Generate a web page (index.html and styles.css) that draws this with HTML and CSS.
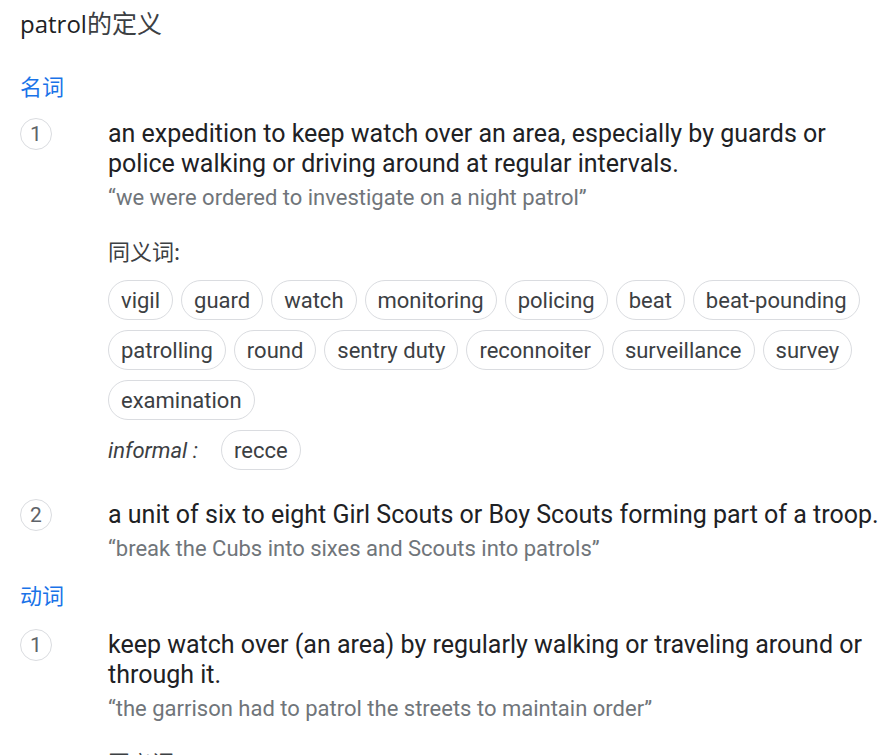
FILE: index.html
```html
<!DOCTYPE html>
<html lang="zh">
<head>
<meta charset="utf-8">
<link rel="stylesheet" href="styles.css">
</head>
<body>
<main class="page">
  <h1 class="title">patrol<span class="cjk">的定义</span></h1>

  <section class="pos">
    <div class="pos-label">名词</div>
    <ol class="senses">
      <li class="sense">
        <span class="num">1</span>
        <div class="body">
          <div class="def">an expedition to keep watch over an area, especially by guards or police walking or driving around at regular intervals.</div>
          <div class="example">“we were ordered to investigate on a night patrol”</div>
          <div class="syn-label">同义词:</div>
          <div class="chips">
            <span class="chip">vigil</span>
            <span class="chip">guard</span>
            <span class="chip">watch</span>
            <span class="chip">monitoring</span>
            <span class="chip">policing</span>
            <span class="chip">beat</span>
            <span class="chip">beat-pounding</span>
            <span class="chip">patrolling</span>
            <span class="chip">round</span>
            <span class="chip">sentry duty</span>
            <span class="chip">reconnoiter</span>
            <span class="chip">surveillance</span>
            <span class="chip">survey</span>
            <span class="chip">examination</span>
          </div>
          <div class="chips">
            <span class="register">informal :</span>
            <span class="chip">recce</span>
          </div>
        </div>
      </li>
      <li class="sense">
        <span class="num">2</span>
        <div class="body">
          <div class="def">a unit of six to eight Girl Scouts or Boy Scouts forming part of a troop.</div>
          <div class="example">“break the Cubs into sixes and Scouts into patrols”</div>
        </div>
      </li>
    </ol>
  </section>

  <section class="pos">
    <div class="pos-label">动词</div>
    <ol class="senses">
      <li class="sense">
        <span class="num">1</span>
        <div class="body">
          <div class="def">keep watch over (an area) by regularly walking or traveling around or through it.</div>
          <div class="example">“the garrison had to patrol the streets to maintain order”</div>
          <div class="syn-label">同义词:</div>
        </div>
      </li>
    </ol>
  </section>
</main>
</body>
</html>
```

FILE: styles.css
```css
* { box-sizing: border-box; }
html, body { margin: 0; padding: 0; background: #fff; }
body {
  font-family: Roboto, "Noto Sans CJK SC", sans-serif;
  color: #202124;
}
.page {
  padding: 6px 4px 0 20px;
}
.title {
  margin: 0;
  height: 32px;
  font-family: "Open Sans", Roboto, "Noto Sans CJK SC", sans-serif;
  font-weight: 400;
  font-size: 24px;
  line-height: 32px;
  color: #202124;
}
.title .cjk {
  font-family: "Noto Sans CJK SC", sans-serif;
  font-size: 25px;
  color: #3c4043;
}
.pos-label {
  font-family: "Noto Sans CJK SC", sans-serif;
  color: #1a73e8;
  font-size: 22px;
  line-height: 30px;
  margin-top: 32px;
}
.pos + .pos .pos-label { margin-top: 15px; }
.senses {
  list-style: none;
  margin: 18px 0 0 0;
  padding: 0;
}
.pos + .pos .senses { margin-top: 20px; }
.sense {
  display: flex;
  align-items: flex-start;
}
.sense + .sense { margin-top: 29px; }
.num {
  flex: none;
  width: 32px;
  height: 32px;
  border: 1px solid #dadce0;
  border-radius: 50%;
  display: flex;
  align-items: center;
  justify-content: center;
  font-size: 21px;
  color: #5f6368;
}
.body {
  margin-left: 56px;
  flex: 1;
  padding-top: 1px;
}
.def {
  font-size: 25px;
  line-height: 30px;
  color: #202124;
}
.example {
  font-size: 22px;
  line-height: 30px;
  color: #70757a;
  margin-top: 4px;
}
.syn-label {
  font-family: "Noto Sans CJK SC", Roboto, sans-serif;
  font-size: 22px;
  line-height: 30px;
  color: #3c4043;
  margin-top: 22px;
}
.chips {
  display: flex;
  flex-wrap: wrap;
  align-items: center;
  gap: 10px 8px;
  margin-top: 10px;
}
.syn-label + .chips { margin-top: 15px; }
.chip {
  height: 40px;
  display: inline-flex;
  align-items: center;
  padding: 0 12px;
  border: 1px solid #dadce0;
  border-radius: 20px;
  font-size: 22px;
  color: #3c4043;
}
.register {
  font-style: italic;
  font-size: 22px;
  color: #3c4043;
  margin-right: 15px;
}
```
